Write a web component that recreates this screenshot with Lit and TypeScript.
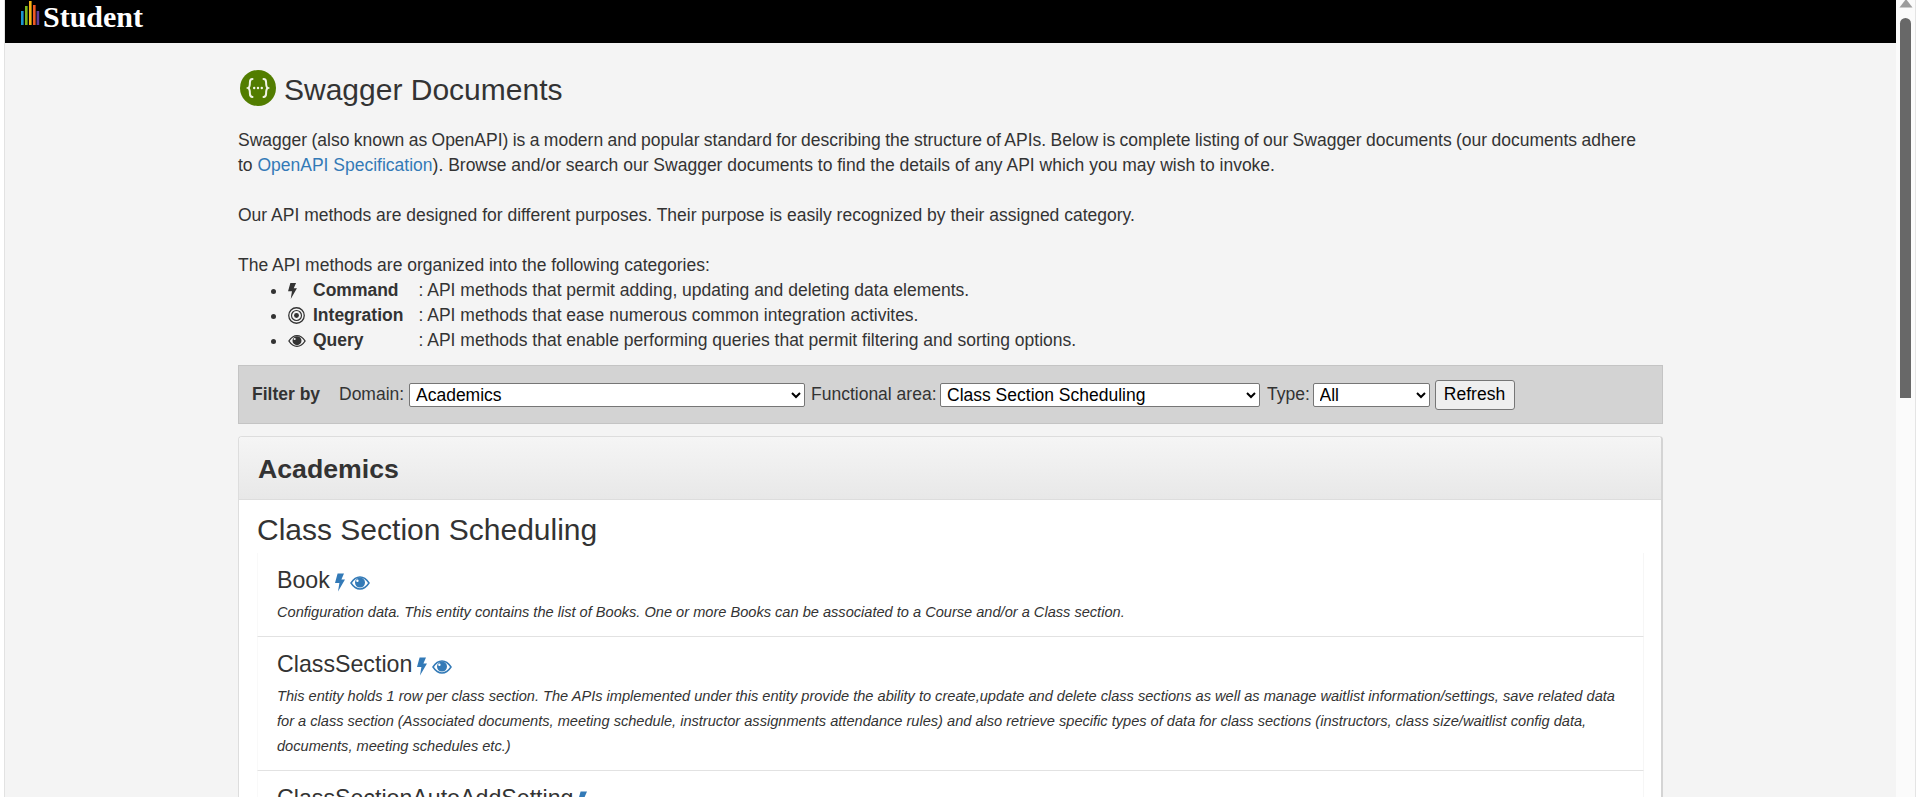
import { LitElement, css, html, svg } from "lit";
import { customElement } from "lit/decorators.js";

const bolt = (w: number, h: number) => html`<svg class="ico" width=${w} height=${h} viewBox="0 0 10 18">
  <polygon points="2.6,0 9,0 6.4,6 10,6 3,18 4.4,9.4 0,9.4" fill="currentColor"></polygon>
</svg>`;

const eye = (w: number, h: number) => html`<svg class="ico" width=${w} height=${h} viewBox="0 0 20 14">
  <path fill="none" stroke="currentColor" stroke-width="1.5" d="M1 7C3.6 3 6.6 1 10 1s6.4 2 9 6c-2.6 4-5.6 6-9 6s-6.4-2-9-6z"></path>
  <path fill="currentColor" fill-rule="evenodd" d="M10 1.6a5 5 0 1 1 0 10 5 5 0 0 1 0-10zM7.4 3.6a1.2 1.2 0 1 0 .01 2.4 1.2 1.2 0 0 0-.01-2.4z"></path>
</svg>`;

const bullseye = html`<svg class="ico" width="17" height="17" viewBox="0 0 16 16" fill="none" stroke="currentColor">
  <circle cx="8" cy="8" r="7.3" stroke-width="1.2"></circle>
  <circle cx="8" cy="8" r="4.7" stroke-width="1.1"></circle>
  <circle cx="8" cy="8" r="2.3" fill="currentColor" stroke="none"></circle>
</svg>`;

const swaggerMark = html`<svg width="36" height="36" viewBox="0 0 36 36">
  <circle cx="18" cy="18" r="18" fill="#527d00"></circle>
  <g fill="none" stroke="#f2f5e8" stroke-width="2" stroke-linecap="round">
    ${svg`<path d="M12.5 9c-2.2 0-2.6 1.2-2.6 3.4 0 3-.3 4.9-1.7 5.6 1.4.7 1.7 2.6 1.7 5.6 0 2.2.4 3.4 2.6 3.4"></path>
    <path d="M23.5 9c2.2 0 2.6 1.2 2.6 3.4 0 3 .3 4.9 1.7 5.6-1.4.7-1.7 2.6-1.7 5.6 0 2.2-.4 3.4-2.6 3.4"></path>`}
  </g>
  <g fill="#f2f5e8">
    <circle cx="14.2" cy="18" r="1.2"></circle>
    <circle cx="18" cy="18" r="1.2"></circle>
    <circle cx="21.8" cy="18" r="1.2"></circle>
  </g>
</svg>`;

const logoBars = [
  { x: 0, y: 11, c: "#1b95cf" },
  { x: 4, y: 6, c: "#7ab51d" },
  { x: 8, y: 1, c: "#f7b512" },
  { x: 12, y: 5, c: "#ee5a24" },
  { x: 15.6, y: 11, c: "#5f3d97" },
];

const categories = [
  { icon: bolt(9, 16), name: "Command", text: ": API methods that permit adding, updating and deleting data elements." },
  { icon: bullseye, name: "Integration", text: ": API methods that ease numerous common integration activites." },
  { icon: eye(18, 14), name: "Query", text: ": API methods that enable performing queries that permit filtering and sorting options." },
];

const entities = [
  {
    name: "Book",
    icons: [bolt(10, 19), eye(20, 14)],
    desc: "Configuration data. This entity contains the list of Books. One or more Books can be associated to a Course and/or a Class section.",
  },
  {
    name: "ClassSection",
    icons: [bolt(10, 19), eye(20, 14)],
    desc: "This entity holds 1 row per class section. The APIs implemented under this entity provide the ability to create,update and delete class sections as well as manage waitlist information/settings, save related data for a class section (Associated documents, meeting schedule, instructor assignments attendance rules) and also retrieve specific types of data for class sections (instructors, class size/waitlist config data, documents, meeting schedules etc.)",
  },
  {
    name: "ClassSectionAutoAddSetting",
    icons: [bolt(10, 19)],
    desc: "",
  },
];

@customElement("app-root")
export class AppRoot extends LitElement {
  static styles = css`
    :host {
      display: grid;
      grid-template-columns: 4px minmax(0, 1fr) 20px 4px;
      height: 797px;
      overflow: hidden;
      background: #fff;
      color: #333;
      font-family: "Liberation Sans", Arial, sans-serif;
      font-size: 17.5px;
      line-height: 25px;
    }

    .page {
      background: #f4f4f4;
      border-left: 1px solid #e2e2e2;
      min-width: 0;
      height: 797px;
      overflow: hidden;
    }

    .topbar {
      display: flex;
      align-items: flex-start;
      height: 43px;
      padding-left: 16px;
      background: #000;
    }

    .brand {
      margin-left: 3px;
      color: #fff;
      font-family: "Liberation Serif", serif;
      font-weight: 700;
      font-size: 30px;
      line-height: 32px;
      margin-top: 1px;
    }

    .logo {
      display: block;
    }

    .container {
      width: 1425px;
      margin-left: 233px;
      padding-top: 27px;
    }

    .title {
      display: flex;
      align-items: flex-end;
      gap: 8px;
      margin-bottom: 22px;
      padding-left: 2px;
    }

    .title h1 {
      margin: 0;
      font-size: 30px;
      font-weight: 400;
      line-height: 33px;
    }

    .title svg {
      display: block;
    }

    p {
      margin: 0 0 25px;
    }

    p.tight {
      margin: 0;
    }

    .snug {
      word-spacing: -0.5px;
    }

    a {
      color: #337ab7;
      text-decoration: none;
    }

    .ico {
      display: block;
      flex: none;
    }

    ul {
      margin: 0 0 12px;
      padding: 0 0 0 50px;
    }

    .cat {
      display: inline-flex;
      align-items: center;
      vertical-align: top;
    }

    .cat-icon {
      width: 25px;
    }

    .cat-name {
      width: 105.5px;
      font-weight: 700;
    }

    .filter {
      display: flex;
      align-items: center;
      height: 59px;
      box-sizing: border-box;
      padding-left: 13px;
      margin-bottom: 12px;
      background: #d3d3d3;
      border: 1px solid #c4c4c4;
    }

    .filter b {
      width: 87px;
    }

    .lbl-domain {
      width: 70px;
    }

    .lbl-area {
      width: 129px;
    }

    .lbl-type {
      width: 45.5px;
    }

    select {
      height: 24px;
      box-sizing: border-box;
      padding: 0 0 0 2px;
      background: #fff;
      border: 1px solid #767676;
      border-radius: 2px;
      color: #000;
      font-family: inherit;
      font-size: 17.5px;
    }

    .sel-domain {
      width: 396px;
      margin-right: 6px;
    }

    .sel-area {
      width: 320px;
      margin-right: 7px;
    }

    .sel-type {
      width: 117px;
      margin-right: 5px;
    }

    button {
      width: 80px;
      height: 30px;
      padding: 0;
      background: #efefef;
      border: 1px solid #767676;
      border-radius: 3px;
      color: #000;
      font-family: inherit;
      font-size: 17.5px;
    }

    .panel {
      background: #fff;
      border: 1px solid #ddd;
      border-right: 2px solid #d4d4d4;
      border-bottom: 0;
      border-radius: 4px 4px 0 0;
    }

    .panel-head {
      height: 63px;
      box-sizing: border-box;
      padding: 16px 19px 0;
      background: linear-gradient(#f5f5f5, #e8e8e8);
      border-bottom: 1px solid #ddd;
      border-radius: 4px 4px 0 0;
    }

    .panel-head h2 {
      margin: 0;
      font-size: 26.7px;
      font-weight: 700;
      line-height: 33px;
    }

    .panel-body {
      padding: 13px 17px 0 18px;
    }

    .panel-body h3 {
      margin: 0 0 7px;
      font-size: 30px;
      font-weight: 400;
      line-height: 33px;
    }

    .entity {
      padding: 15px 18px 11px;
      border-left: 1px solid #f9f9f9;
      border-right: 1px solid #f6f6f6;
      border-bottom: 1px solid #e2e2e2;
    }

    .entity-head {
      display: flex;
      align-items: center;
      gap: 5px;
      margin-bottom: 7px;
      font-size: 23.2px;
      line-height: 25px;
    }

    .entity-head .ico {
      margin-top: 4px;
      color: #337ab7;
    }

    .desc {
      margin: 0;
      padding: 0 0 0 1px;
      font-size: 14.6px;
      font-style: italic;
      line-height: 25px;
    }

    .entity-head span {
      margin-left: 1px;
    }

    .scroll {
      background: #fbfbfb;
      border-right: 1px solid #e4e4e4;
      display: flex;
      flex-direction: column;
      align-items: center;
    }

    .scroll svg {
      display: block;
    }

    .thumb {
      width: 11px;
      height: 380px;
      margin-top: 10px;
      background: #686868;
      border-radius: 6px 6px 0 0;
    }
  `;

  render() {
    return html`
      <div></div>
      <div class="page">
        <header class="topbar">
          <svg class="logo" width="19" height="26" viewBox="0 0 19 26">
            ${logoBars.map(
              (b) => svg`<rect x=${b.x} y=${b.y} width="2.6" height=${25 - b.y} fill=${b.c}></rect>`,
            )}
          </svg>
          <span class="brand">Student</span>
        </header>
        <main class="container">
          <div class="title">${swaggerMark}<h1>Swagger Documents</h1></div>
          <p>
            <span class="snug">Swagger (also known as OpenAPI) is a modern and popular standard for describing the structure of APIs. Below is complete listing of our Swagger documents (our documents adhere</span><br />
            to <a href="#">OpenAPI Specification</a>). Browse and/or search our Swagger documents to find the details of any API which you may wish to invoke.
          </p>
          <p>Our API methods are designed for different purposes. Their purpose is easily recognized by their assigned category.</p>
          <p class="tight">The API methods are organized into the following categories:</p>
          <ul>
            ${categories.map(
              (c) => html`<li>
                <span class="cat">
                  <span class="cat-icon">${c.icon}</span>
                  <span class="cat-name">${c.name}</span>
                  <span>${c.text}</span>
                </span>
              </li>`,
            )}
          </ul>
          <div class="filter">
            <b>Filter by</b>
            <label class="lbl-domain">Domain:</label>
            <select class="sel-domain"><option>Academics</option></select>
            <label class="lbl-area">Functional area:</label>
            <select class="sel-area"><option>Class Section Scheduling</option></select>
            <label class="lbl-type">Type:</label>
            <select class="sel-type"><option>All</option></select>
            <button>Refresh</button>
          </div>
          <section class="panel">
            <div class="panel-head"><h2>Academics</h2></div>
            <div class="panel-body">
              <h3>Class Section Scheduling</h3>
              ${entities.map(
                (e) => html`<div class="entity">
                  <div class="entity-head"><span>${e.name}</span>${e.icons}</div>
                  <p class="desc">${e.desc}</p>
                </div>`,
              )}
            </div>
          </section>
        </main>
      </div>
      <div class="scroll">
        <svg width="14" height="8" viewBox="0 0 14 8"><polygon points="7,-1 13.5,7.5 .5,7.5" fill="#9c9c9c"></polygon></svg>
        <div class="thumb"></div>
      </div>
      <div></div>
    `;
  }
}
